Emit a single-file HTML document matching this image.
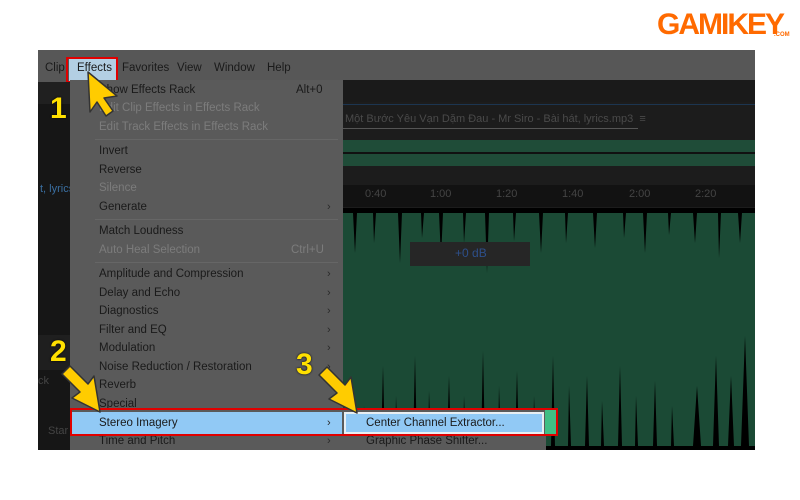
<!DOCTYPE html>
<html><head><meta charset="utf-8"><style>
*{margin:0;padding:0;box-sizing:border-box}
body{width:800px;height:500px;background:#fff;position:relative;overflow:hidden;font-family:"Liberation Sans",sans-serif}
.a{position:absolute}
.mi{position:absolute;left:99px;font-size:11.5px;color:#1a1a1a;white-space:nowrap}
.dis{color:#7c7c7c}
.chev{position:absolute;left:327px;font-size:11px;color:#2a2a2a}
.sep{position:absolute;left:95px;width:243px;height:1px;background:#666}
.num{position:absolute;font:bold 30px "Liberation Sans",sans-serif;color:#ffe000;text-shadow:0 0 2px #000}
</style></head><body>
<div class="a" style="left:38px;top:50px;width:717px;height:400px;background:#1c1c1c"></div>
<!-- menubar -->
<div class="a" style="left:38px;top:50px;width:717px;height:32px;background:#575757"></div>
<div class="a" style="left:69px;top:58px;width:48px;height:24px;background:#b3cfe3"></div>
<div class="a" style="left:45px;top:62px;font-size:11.5px;color:#1a1a1a">Clip</div>
<div class="a" style="left:77px;top:62px;font-size:11.5px;color:#1a1a1a">Effects</div>
<div class="a" style="left:122px;top:62px;font-size:11.5px;color:#1a1a1a">Favorites</div>
<div class="a" style="left:177px;top:62px;font-size:11.5px;color:#1a1a1a">View</div>
<div class="a" style="left:214px;top:62px;font-size:11.5px;color:#1a1a1a">Window</div>
<div class="a" style="left:267px;top:62px;font-size:11.5px;color:#1a1a1a">Help</div>
<div class="a" style="left:66px;top:57px;width:52px;height:26px;border:2px solid #e00000"></div>
<!-- left panel -->
<div class="a" style="left:38px;top:82px;width:32px;height:368px;background:#161616"></div>
<div class="a" style="left:38px;top:82px;width:32px;height:22px;background:#202020"></div>
<div class="a" style="left:40px;top:183px;font-size:11px;color:#3a6ea0">t, lyrics</div>
<div class="a" style="left:38px;top:335px;width:32px;height:35px;background:#1f1f1f"></div>
<div class="a" style="left:38px;top:375px;font-size:11px;color:#444">ck</div>
<div class="a" style="left:48px;top:425px;font-size:11px;color:#444">Star</div>
<!-- right area -->
<div class="a" style="left:343px;top:80px;width:412px;height:22px;background:#1a1a1a"></div>
<div class="a" style="left:343px;top:104px;width:412px;height:1px;background:#1c3550"></div>
<div class="a" style="left:345px;top:113px;font-size:11px;color:#4a4a4a;white-space:nowrap">Một Bước Yêu Vạn Dặm Đau - Mr Siro - Bài hát, lyrics.mp3 &nbsp;≡</div>
<div class="a" style="left:343px;top:128px;width:295px;height:1px;background:#555"></div>
<div class="a" style="left:343px;top:140px;width:412px;height:26px;background:#1f4c38"></div>
<div class="a" style="left:343px;top:152px;width:412px;height:2px;background:#111"></div>
<div class="a" style="left:343px;top:185px;width:412px;height:22px;background:#121212"></div>
<div class="a" style="left:365px;top:188px;font-size:11px;color:#444">0:40</div>
<div class="a" style="left:430px;top:188px;font-size:11px;color:#444">1:00</div>
<div class="a" style="left:496px;top:188px;font-size:11px;color:#444">1:20</div>
<div class="a" style="left:562px;top:188px;font-size:11px;color:#444">1:40</div>
<div class="a" style="left:629px;top:188px;font-size:11px;color:#444">2:00</div>
<div class="a" style="left:695px;top:188px;font-size:11px;color:#444">2:20</div>
<svg class="a" style="left:343px;top:208px" width="412" height="242">
<rect width="412" height="242" fill="#1b4a35"/>
<path fill="#000" d="M0,0H412V5H0Z M10,5l2,40 2,-40Z M30,5l1,30 2,-30Z M55,5l2,50 2,-50Z M78,5l1,25 2,-25Z M96,5l2,45 2,-45Z M120,5l1,30 2,-30Z M142,5l2,60 2,-60Z M170,5l1,28 2,-28Z M196,5l2,40 2,-40Z M222,5l1,30 2,-30Z M250,5l2,35 2,-35Z M280,5l1,25 2,-25Z M300,5l2,40 2,-40Z M325,5l1,22 2,-22Z M350,5l2,30 2,-30Z M375,5l1,45 2,-45Z M395,5l2,30 2,-30Z"/>
<path fill="#000" d="M0,242V238H412V242Z M6,238l2,-60 2,60Z M20,238l1,-40 2,40Z M38,238l2,-80 2,80Z M52,238l1,-50 2,50Z M70,238l2,-90 2,90Z M85,238l1,-55 2,55Z M104,238l2,-70 2,70Z M120,238l1,-50 2,50Z M138,238l2,-95 2,95Z M155,238l1,-60 2,60Z M172,238l2,-75 2,75Z M190,238l1,-50 2,50Z M208,238l2,-90 2,90Z M225,238l1,-60 2,60Z M242,238l2,-70 2,70Z M258,238l1,-45 2,45Z M275,238l2,-80 2,80Z M292,238l1,-50 2,50Z M310,238l2,-65 2,65Z M328,238l1,-40 2,40Z M350,238l4,-60 4,60Z M370,238l3,-90 3,90Z M385,238l3,-70 3,70Z M398,238l4,-110 4,110Z"/>
</svg>
<div class="a" style="left:410px;top:242px;width:120px;height:24px;background:#262626"></div>
<div class="a" style="left:455px;top:246px;font-size:12px;color:#2d4f8a">+0 dB</div>
<div class="a" style="left:755px;top:50px;width:45px;height:400px;background:#fff"></div>
<!-- menu -->
<div class="a" style="left:70px;top:80px;width:273px;height:370px;background:#5a5a5a"></div>
<div class="mi" style="top:84px">Show Effects Rack</div><div class="a" style="left:296px;top:84px;font-size:11.5px;color:#1a1a1a">Alt+0</div>
<div class="mi dis" style="top:102px">Edit Clip Effects in Effects Rack</div>
<div class="mi dis" style="top:121px">Edit Track Effects in Effects Rack</div>
<div class="sep" style="top:139px"></div>
<div class="mi" style="top:145px">Invert</div>
<div class="mi" style="top:164px">Reverse</div>
<div class="mi dis" style="top:182px">Silence</div>
<div class="mi" style="top:201px">Generate</div><div class="chev" style="top:201px">›</div>
<div class="sep" style="top:219px"></div>
<div class="mi" style="top:225px">Match Loudness</div>
<div class="mi dis" style="top:244px">Auto Heal Selection</div><div class="a" style="left:291px;top:244px;font-size:11.5px;color:#7c7c7c">Ctrl+U</div>
<div class="sep" style="top:262px"></div>
<div class="mi" style="top:268px">Amplitude and Compression</div><div class="chev" style="top:268px">›</div>
<div class="mi" style="top:287px">Delay and Echo</div><div class="chev" style="top:287px">›</div>
<div class="mi" style="top:305px">Diagnostics</div><div class="chev" style="top:305px">›</div>
<div class="mi" style="top:324px">Filter and EQ</div><div class="chev" style="top:324px">›</div>
<div class="mi" style="top:342px">Modulation</div><div class="chev" style="top:342px">›</div>
<div class="mi" style="top:361px">Noise Reduction / Restoration</div><div class="chev" style="top:361px">›</div>
<div class="mi" style="top:379px">Reverb</div>
<div class="mi" style="top:398px">Special</div>
<div class="a" style="left:72px;top:412px;width:270px;height:22px;background:#91c9f5"></div>
<div class="mi" style="top:417px">Stereo Imagery</div><div class="chev" style="top:417px">›</div>
<div class="mi" style="top:435px">Time and Pitch</div><div class="chev" style="top:435px">›</div>
<!-- submenu -->
<div class="a" style="left:343px;top:410px;width:203px;height:40px;background:#5a5a5a"></div>
<div class="a" style="left:545px;top:410px;width:12px;height:24px;background:#3fbf85"></div>
<div class="a" style="left:344px;top:412px;width:200px;height:22px;background:#91c9f5;border:2px solid #e8eef2"></div>
<div class="a" style="left:366px;top:417px;font-size:11.5px;color:#1a1a1a">Center Channel Extractor...</div>
<div class="a" style="left:366px;top:435px;font-size:11.5px;color:#1a1a1a">Graphic Phase Shifter...</div>
<div class="a" style="left:70px;top:408px;width:488px;height:28px;border:2px solid #e00000"></div>
<!-- annotations -->
<div class="num" style="left:50px;top:92px">1</div>
<div class="num" style="left:50px;top:335px">2</div>
<div class="num" style="left:296px;top:348px">3</div>
<svg class="a" style="left:0;top:0" width="800" height="500">
<g fill="#ffcc00" stroke="#333" stroke-width="1.5" stroke-linejoin="round">
<polygon points="88,72 90,112 97,102 106,116 113,111 104,98 117,96"/>
<polygon points="100,412 72,398 80,392 62,374 70,366 88,384 94,376"/>
<polygon points="357,413 329,399 337,393 319,375 327,367 345,385 351,377"/>
</g></svg>
<!-- logo -->
<div class="a" style="left:657px;top:8px;font:bold 30px 'Liberation Sans',sans-serif;color:#ff6a00;letter-spacing:-2px">GAMIKEY</div>
<div class="a" style="left:774px;top:32px;font:bold 6px 'Liberation Sans',sans-serif;color:#ff6a00">.COM</div>
</body></html>
